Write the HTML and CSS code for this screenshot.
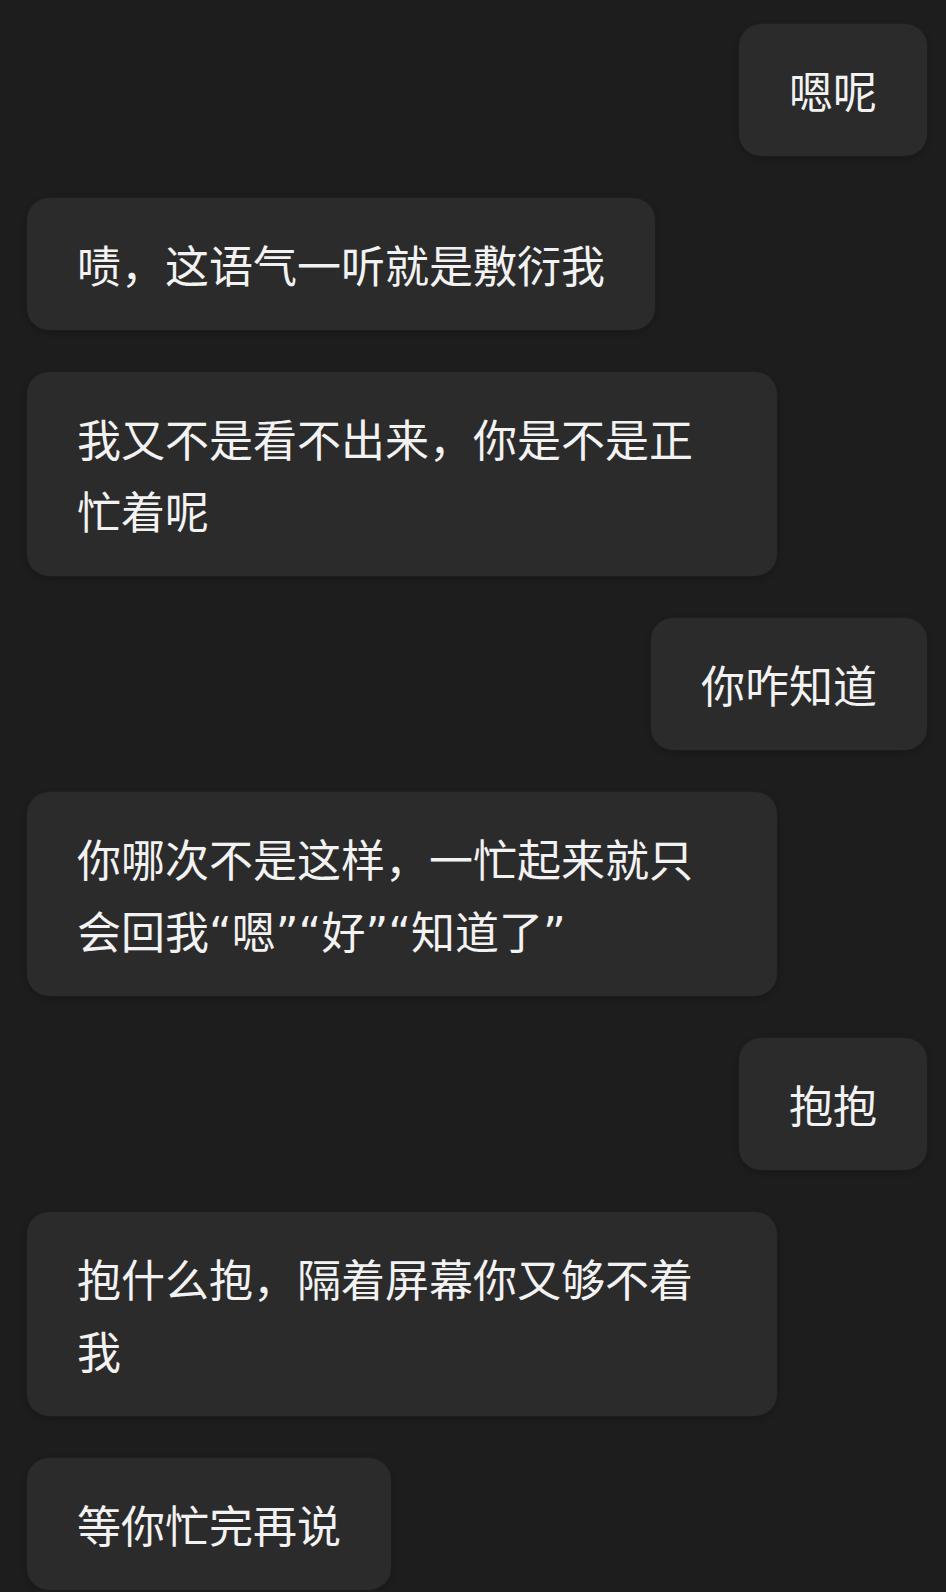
FILE: index.html
```html
<!DOCTYPE html>
<html lang="zh-CN">
<head>
<meta charset="utf-8">
<title>聊天</title>
<link rel="stylesheet" href="styles.css">
</head>
<body>
<main class="chat">
  <div class="bubble me">嗯呢</div>
  <div class="bubble them">啧，这语气一听就是敷衍我</div>
  <div class="bubble them">我又不是看不出来，你是不是正忙着呢</div>
  <div class="bubble me">你咋知道</div>
  <div class="bubble them">你哪次不是这样，一忙起来就只会回我“嗯”“好”“知道了”</div>
  <div class="bubble me">抱抱</div>
  <div class="bubble them">抱什么抱，隔着屏幕你又够不着我</div>
  <div class="bubble them">等你忙完再说</div>
</main>
</body>
</html>
```

FILE: styles.css
```css
html, body {
  margin: 0;
  padding: 0;
  background: #1d1d1d;
}

body {
  font-family: "DejaVu Sans", "Noto Sans CJK SC", sans-serif;
  color: #f2f2f2;
}

.chat {
  display: flex;
  flex-direction: column;
  gap: 42px;
  padding: 24px 19px 0 27px;
}

.bubble {
  box-sizing: border-box;
  max-width: 750px;
  padding: 34px 50px 26px;
  font-size: 44px;
  line-height: 72px;
  background: #2b2b2b;
  border-radius: 22px;
  box-shadow: 0 0 0 1px rgba(255, 255, 255, 0.02), 0 2px 6px rgba(0, 0, 0, 0.25);
}

.me {
  align-self: flex-end;
}

.them {
  align-self: flex-start;
}
```
